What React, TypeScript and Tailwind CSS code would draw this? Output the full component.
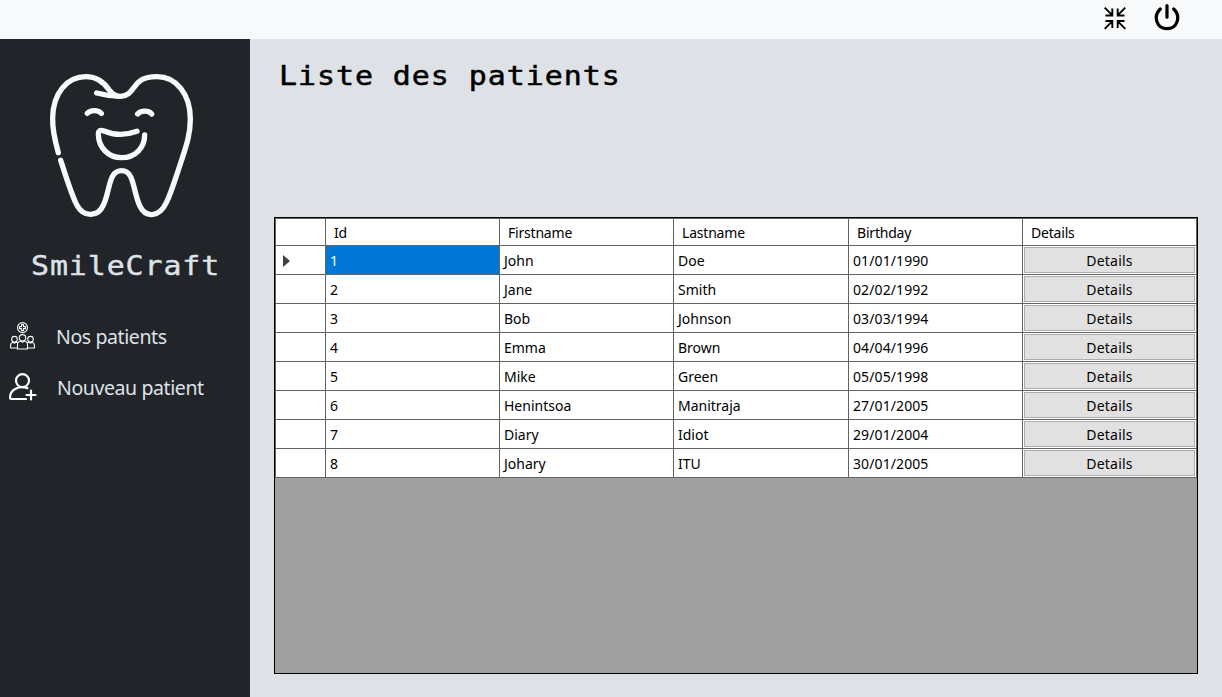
const patients = [
  ["1", "John", "Doe", "01/01/1990"],
  ["2", "Jane", "Smith", "02/02/1992"],
  ["3", "Bob", "Johnson", "03/03/1994"],
  ["4", "Emma", "Brown", "04/04/1996"],
  ["5", "Mike", "Green", "05/05/1998"],
  ["6", "Henintsoa", "Manitraja", "27/01/2005"],
  ["7", "Diary", "Idiot", "29/01/2004"],
  ["8", "Johary", "ITU", "30/01/2005"],
];

const headers = ["Id", "Firstname", "Lastname", "Birthday", "Details"];
const columns = "grid grid-cols-[50px_174px_174px_175px_174px_174px]";
const line = "border-r border-b border-[#646464]";

function ToothLogo() {
  return (
    <svg className="h-[170px] w-[190px]" viewBox="0 0 570 510" fill="none" stroke="#f8f9fa" strokeWidth="16" strokeLinecap="round" strokeLinejoin="round">
      <path d="M85 278C72 232 67 205 68 174C69 98 112 50 168 50C206 50 226 72 239 92C247 103 254 106 262 108" />
      <path d="M200 99C222 105 248 109 272 109C321 106 300 50 381 50C438 50 481 101 481 177C481 222 470 254 455 300C438 350 425 395 409 428C387 475 345 473 329 437C308 390 313 332 275 332C235 332 241 390 221 433C204 473 161 473 140 434C122 398 108 348 92 301" />
      <path d="M172 160C181 150 204 148 214 160M323 162C331 152 356 149 365 162" />
      <path d="M321 214C288 226 252 226 222 213C210 208 205 213 205 223C206 263 235 293 275 293C316 293 344 263 344 225" />
    </svg>
  );
}

function PatientsIcon() {
  return (
    <svg className="h-7 w-[26px]" viewBox="0 0 26 28" fill="none" stroke="#f8f9fa" strokeWidth="1.1" strokeLinejoin="round">
      <circle cx="12.5" cy="5.6" r="5" />
      <path d="M11.5 2.6h2v2h2v2h-2v2h-2v-2h-2v-2h2z" />
      <circle cx="12.5" cy="15.8" r="3.2" />
      <circle cx="4.5" cy="17.200" r="2.8" />
      <circle cx="20.5" cy="17.200" r="2.8" />
      <path d="M7.500 27v-4.600c0-2.400 1.800-3.200 3.500-3.400l1.500 1.200 1.500-1.200c1.700.2 3.500 1 3.500 3.400V27zM7.500 26H.6v-2.800c0-1.800 1.200-2.700 2.600-3L4.500 21.200l1.300-1 2 .6M17.500 26h6.900v-2.800c0-1.800-1.200-2.700-2.600-3L20.500 21.200l-1.300-1-2 .6" />
    </svg>
  );
}

function NewPatientIcon() {
  return (
    <svg className="h-7 w-7" viewBox="0 0 28 28" fill="none" stroke="#fff" strokeWidth="2.2" strokeLinecap="round">
      <circle cx="13.5" cy="7.6" r="6.500" />
      <path d="M18.500 15.200c-8.500-3-17.500 1.500-17.500 9.300 0 1 .5 1.500 1.500 1.500H17M22 17.500v9M17.500 22h9" />
    </svg>
  );
}

function CollapseIcon() {
  return (
    <svg className="h-[23px] w-[22px]" viewBox="0 0 22 23" fill="none" stroke="#000" strokeWidth="1.9">
      <path d="M.7.7l7.500 7.500M8.300 1.500v7H1.500M21.300.7l-7.500 7.500M13.700 1.500v7h6.800M.7 21.800l7.500-7.500M8.300 21v-7H1.500M21.300 21.800l-7.500-7.500M13.700 21v-7h6.800" />
    </svg>
  );
}

function PowerIcon() {
  return (
    <svg className="h-[27px] w-[26px]" viewBox="0 0 26 27" fill="none" stroke="#000" strokeWidth="3.2" strokeLinecap="round">
      <path d="M13 1.600v11.600M6.300 5C-1.500 12.600 3 24.700 13 24.700S27.500 12.600 19.700 5" />
    </svg>
  );
}

export default function App() {
  return (
    <div className="flex h-[697px] w-[1222px] flex-col overflow-hidden bg-[#dee2e6] font-['Noto_Sans',sans-serif] text-black">
      <header className="flex h-[39px] shrink-0 items-start justify-end gap-7 bg-[#f8f9fa] pr-[42px]">
        <button className="pt-[7px]" aria-label="Réduire"><CollapseIcon /></button>
        <button className="pt-1" aria-label="Quitter"><PowerIcon /></button>
      </header>
      <div className="flex min-h-0 flex-1">
        <aside className="flex w-[250px] shrink-0 flex-col bg-[#212529] text-[#dee2e6]">
          <div className="pt-[21px] pl-[30px]"><ToothLogo /></div>
          <div className="mt-[18px] ml-[31px] h-9 w-[200px] origin-left scale-x-[1.15] font-['DejaVu_Sans_Mono',monospace] text-[26px] leading-9 tracking-[0.8px] whitespace-nowrap [-webkit-text-stroke:0.4px]">SmileCraft</div>
          <nav className="pt-[38px] text-[19.5px] leading-7 tracking-[-0.4px]">
            <a className="flex h-7 items-center pl-[10px]">
              <PatientsIcon />
              <span className="ml-5 pt-[2px]">Nos patients</span>
            </a>
            <a className="mt-[23px] flex h-7 items-center pl-[9px]">
              <NewPatientIcon />
              <span className="ml-5 pt-[2px]">Nouveau patient</span>
            </a>
          </nav>
        </aside>
        <main className="flex-1 pl-6">
          <h1 className="mt-[19px] ml-[5px] h-9 w-[300px] origin-left scale-x-[1.15] font-['DejaVu_Sans_Mono',monospace] text-[26px] leading-9 tracking-[0.85px] whitespace-nowrap [-webkit-text-stroke:0.5px]">Liste des patients</h1>
          <div className="mt-[123px] h-[457px] w-[924px] border border-black bg-[#a0a0a0] text-[14px]">
            <div className="w-[922px] border-t border-l border-[#646464] bg-white">
              <div className={`${columns} h-[27px] leading-[27px] tracking-[-0.2px]`}>
                <div className={`${line} h-[27px]`} />
                {headers.map((h) => <div key={h} className={`${line} h-[27px] pl-2`}>{h}</div>)}
              </div>
              {patients.map((p, i) => (
                <div key={p[0]} className={`${columns} h-[29px] leading-[29px]`}>
                  <div className={`${line} flex h-[29px] items-center pt-px pl-[7px]`}>
                    {i === 0 && <svg className="h-3 w-[7px]" viewBox="0 0 7 12"><path d="M0 0l7 6-7 6z" fill="#404040" /></svg>}
                  </div>
                  {p.map((value, c) => (
                    <div key={c} className={`${line} h-[29px] pl-1 ${c === 3 ? "tracking-[0.1px]" : ""} ${i === 0 && c === 0 ? "bg-[#0078d7] text-white" : ""}`}>{value}</div>
                  ))}
                  <div className={`${line} h-[29px] p-px`}>
                    <button className="block h-[26px] w-[171px] border border-[#adadad] bg-[#e1e1e1] pt-[2px] leading-[22px] tracking-[0.2px]">Details</button>
                  </div>
                </div>
              ))}
            </div>
          </div>
        </main>
      </div>
    </div>
  );
}
